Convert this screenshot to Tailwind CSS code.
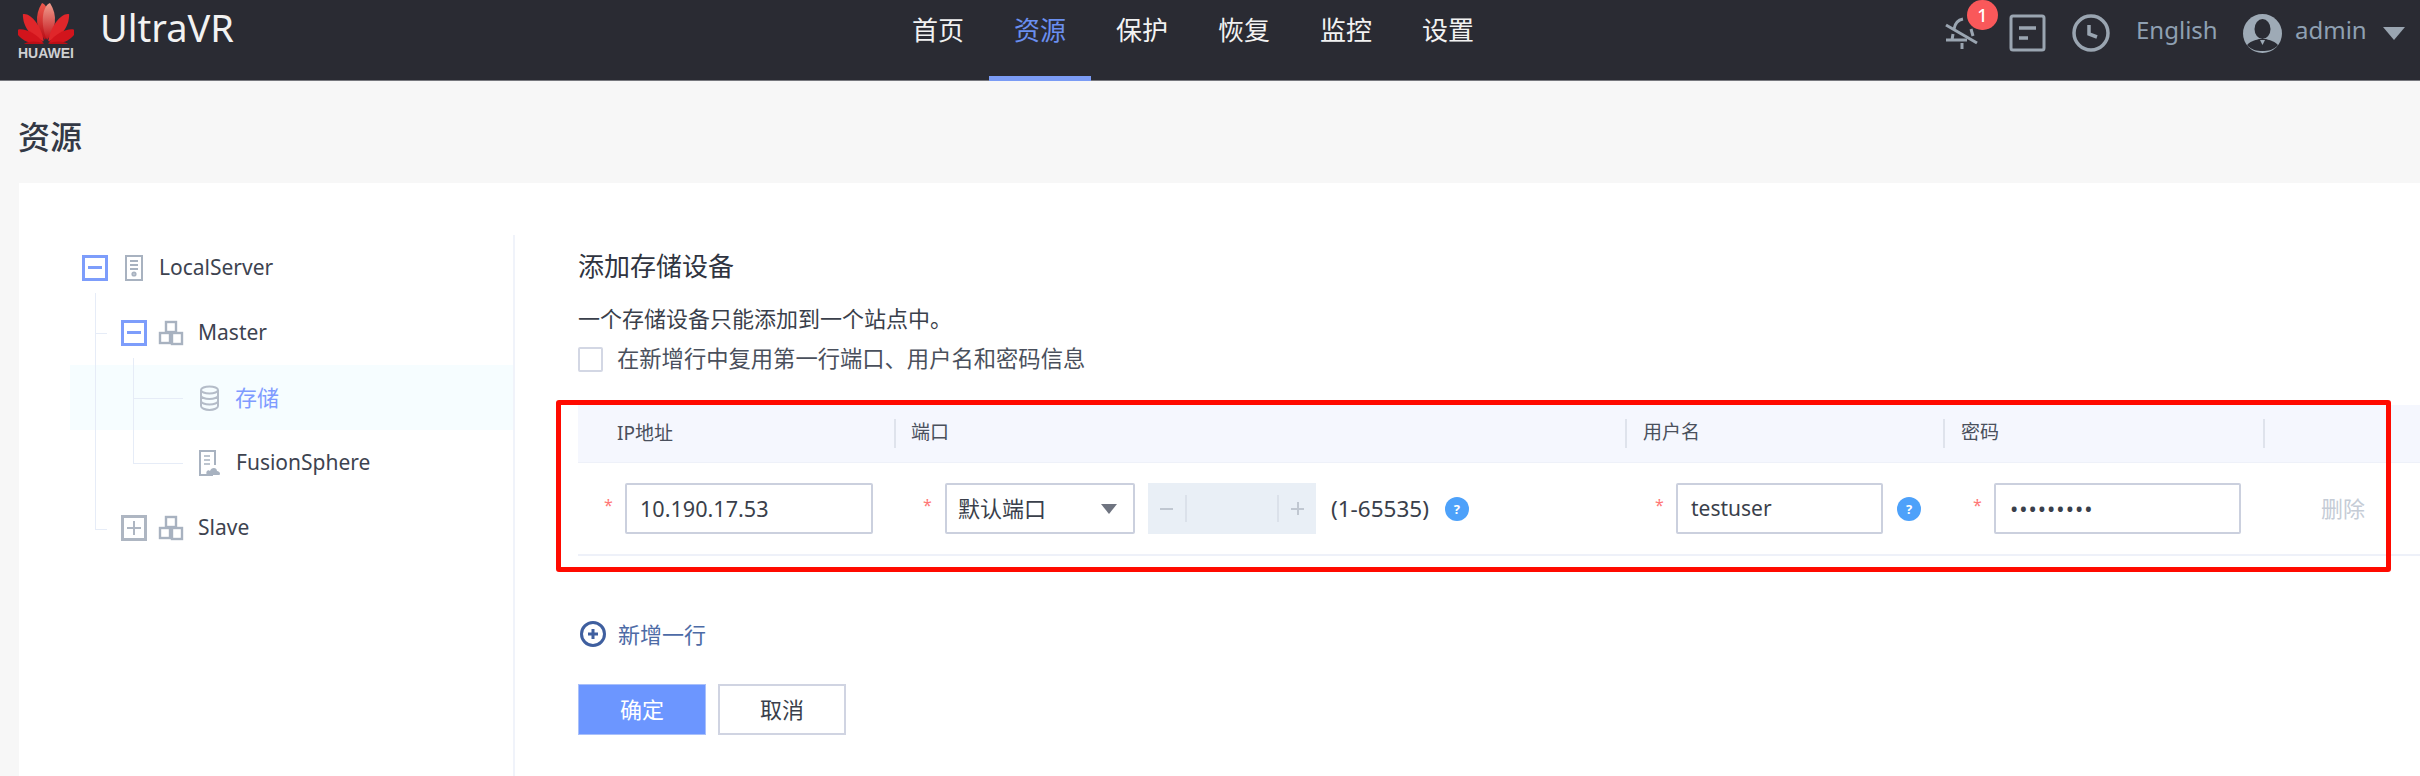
<!DOCTYPE html>
<html lang="zh-CN">
<head>
    <meta charset="UTF-8">
    <title>UltraVR</title>
    <script src="https://cdn.jsdelivr.net/npm/@tailwindcss/browser@4"></script>
</head>
<body class="bg-[#f7f7f7] h-[776px] overflow-hidden relative font-['Noto_Sans','Noto_Sans_CJK_SC',sans-serif] text-[22px] text-[#3a3f4b]">

    <!-- top bar -->
    <header class="h-[81px] bg-[#2a2b33] border-b border-[#77787e] flex">
        <div class="ml-[18px] w-[56px] pt-[2px] flex flex-col items-center">
            <svg class="shrink-0" width="56" height="42" viewBox="0 0 56 42">
                <defs>
                    <linearGradient id="topL" x1="0" y1="0" x2="0" y2="1"><stop offset="0" stop-color="#ee5a4e"/><stop offset="1" stop-color="#b80d16"/></linearGradient>
                    <linearGradient id="topR" x1="0" y1="0" x2="0" y2="1"><stop offset="0" stop-color="#f0a090"/><stop offset="1" stop-color="#c4121a"/></linearGradient>
                </defs>
                <g transform="translate(28 41)">
                    <path fill="url(#topL)" d="M-1 -3C-10 -13 -12 -28 -4 -40C4 -37 6 -18 -1 -3Z"/>
                    <path fill="#e0262a" transform="rotate(-33) scale(.92)" d="M-1 -3C-10 -13 -12 -28 -4 -40C4 -37 6 -18 -1 -3Z"/>
                    <path fill="#d2141c" transform="rotate(-63) scale(.82)" d="M-1 -3C-10 -13 -12 -28 -4 -40C4 -37 6 -18 -1 -3Z"/>
                    <path fill="#b90f16" transform="rotate(-92) scale(.6)" d="M-1 -3C-10 -13 -12 -28 -4 -40C4 -37 6 -18 -1 -3Z"/>
                    <g transform="scale(-1 1)">
                        <path fill="url(#topR)" d="M-1 -3C-10 -13 -12 -28 -4 -40C4 -37 6 -18 -1 -3Z"/>
                        <path fill="#e0262a" transform="rotate(-33) scale(.92)" d="M-1 -3C-10 -13 -12 -28 -4 -40C4 -37 6 -18 -1 -3Z"/>
                        <path fill="#d2141c" transform="rotate(-63) scale(.82)" d="M-1 -3C-10 -13 -12 -28 -4 -40C4 -37 6 -18 -1 -3Z"/>
                        <path fill="#b90f16" transform="rotate(-92) scale(.6)" d="M-1 -3C-10 -13 -12 -28 -4 -40C4 -37 6 -18 -1 -3Z"/>
                    </g>
                </g>
            </svg>
            <span class="font-['Liberation_Sans',sans-serif] font-bold text-[14px] leading-[14px] mt-[2px] text-[#cfd0d2] whitespace-nowrap">HUAWEI</span>
        </div>
        <div class="ml-[26px] pt-[1px] text-[38px] leading-[52px] text-[#f2f2f2]">UltraVR</div>

        <nav class="ml-[653px] flex text-[26px] text-[#f2f2f2]">
            <a class="w-[102px] h-[81px] pt-[11px] leading-[38px] text-center">首页</a>
            <a class="w-[102px] h-[81px] pt-[11px] leading-[38px] text-center text-[#6a8ff0] border-b-[5px] border-[#7b9cf5]">资源</a>
            <a class="w-[102px] h-[81px] pt-[11px] leading-[38px] text-center">保护</a>
            <a class="w-[102px] h-[81px] pt-[11px] leading-[38px] text-center">恢复</a>
            <a class="w-[102px] h-[81px] pt-[11px] leading-[38px] text-center">监控</a>
            <a class="w-[102px] h-[81px] pt-[11px] leading-[38px] text-center">设置</a>
        </nav>

        <div class="absolute left-[1945px] top-0 h-[81px]">
            <!-- bell muted -->
            <svg class="absolute left-0 top-[14px]" width="34" height="36" viewBox="0 0 34 36" fill="none" stroke="#9aa5b1" stroke-width="3">
                <path d="M1 11L32 29"/>
                <path d="M9 15C10 9 13 6 18 5"/>
                <path d="M26 15L28 22"/>
                <path d="M1 26H7L8 20M7 26H22"/>
                <path d="M17 29V35"/>
            </svg>
            <span class="absolute left-[22px] top-0 w-[31px] h-[30px] rounded-full bg-[#f9585a] text-white text-[18px] leading-[30px] text-center font-medium">1</span>
            <!-- task box -->
            <svg class="absolute left-[64px] top-[14px]" width="37" height="38" viewBox="0 0 37 38" fill="none" stroke="#9aa5b1" stroke-width="3">
                <rect x="2" y="2" width="33" height="34" rx="2"/>
                <path d="M10 14H27M10 24H19" stroke-width="3.5"/>
            </svg>
            <!-- clock -->
            <svg class="absolute left-[127px] top-[14px]" width="38" height="38" viewBox="0 0 38 38" fill="none" stroke="#9aa5b1" stroke-width="3.5">
                <circle cx="19" cy="19" r="17"/>
                <path d="M17 11V20L25 23"/>
            </svg>
            <span class="absolute left-[191px] top-[13px] text-[24px] leading-[34px] text-[#8fa0b2]">English</span>
            <!-- avatar -->
            <svg class="absolute left-[298px] top-[14px]" width="39" height="39" viewBox="0 0 39 39">
                <circle cx="19.5" cy="19.5" r="19.5" fill="#9eaab6"/>
                <ellipse cx="19.5" cy="15" rx="8" ry="10" fill="#2a2b33"/>
                <path d="M4 31C9 26 14 26 16 25H23C25 26 30 26 35 31C31 36 25 37 19.5 37C14 37 8 36 4 31Z" fill="#2a2b33"/>
                <path d="M17 26L19.5 31L22 26Z" fill="#9eaab6"/>
            </svg>
            <span class="absolute left-[350px] top-[13px] text-[24px] leading-[34px] text-[#8fa0b2]">admin</span>
            <span class="absolute left-[438px] top-[27px] w-0 h-0 border-x-[11px] border-x-transparent border-t-[13px] border-t-[#9aa5b1]"></span>
        </div>
    </header>

    <h1 class="h-[102px] pl-[18px] pt-[32px] text-[32px] leading-[48px] font-medium text-[#333845]">资源</h1>

    <main class="ml-[19px] h-[593px] bg-white flex">
        <!-- resource tree -->
        <aside class="w-[494px] h-full pt-[52px] pl-[51px]">
            <div class="relative text-[#3d4350] text-[21px]">
                <div class="flex items-center h-[65px] pl-[12px]">
                    <span class="w-[26px] h-[26px] border-[3px] border-[#7d9dfb] flex items-center justify-center"><i class="w-[14px] h-[3px] bg-[#7d9dfb]"></i></span>
                    <svg class="ml-[17px]" width="18" height="26" viewBox="0 0 18 26" fill="none" stroke="#a8b2c0" stroke-width="2">
                        <rect x="1" y="1" width="16" height="24"/>
                        <path d="M5 6H13M5 10H13M5 14H13"/>
                        <circle cx="9" cy="19" r="1.6"/>
                    </svg>
                    <span class="ml-[16px]">LocalServer</span>
                </div>
                <div class="flex items-center h-[65px] pl-[51px]">
                    <span class="w-[26px] h-[26px] border-[3px] border-[#7d9dfb] flex items-center justify-center"><i class="w-[14px] h-[3px] bg-[#7d9dfb]"></i></span>
                    <svg class="ml-[11px]" width="26" height="26" viewBox="0 0 26 26" fill="none" stroke="#a8b2c0" stroke-width="2.4">
                        <rect x="8" y="2" width="10" height="10"/>
                        <rect x="2" y="13" width="10" height="10"/>
                        <rect x="14" y="13" width="10" height="11"/>
                    </svg>
                    <span class="ml-[14px]">Master</span>
                </div>
                <div class="flex items-center h-[65px] pl-[130px] bg-[#f6fdff] text-[22px] text-[#7f9bff]">
                    <svg width="19" height="26" viewBox="0 0 19 26" fill="none" stroke="#b4bcc8" stroke-width="2">
                        <ellipse cx="9.5" cy="5" rx="8.5" ry="3.6"/>
                        <path d="M1 5V21C1 23 5 25 9.5 25C14 25 18 23 18 21V5M1 10.5C1 12.5 5 14 9.5 14C14 14 18 12.5 18 10.5M1 16C1 18 5 19.5 9.5 19.5C14 19.5 18 18 18 16"/>
                    </svg>
                    <span class="ml-[16px]">存储</span>
                </div>
                <div class="flex items-center h-[65px] pl-[129px]">
                    <svg width="22" height="26" viewBox="0 0 22 26" fill="none" stroke="#a8b2c0" stroke-width="2">
                        <path d="M14 25H1V1H16V15"/>
                        <path d="M5 6H11M5 10H11M5 14H11" stroke-width="1.6"/>
                        <path d="M8 25C6 22 9 19 11 21C12 17 18 17 18 21C21 21 22 25 20 25Z" fill="#a8b2c0" stroke="none"/>
                    </svg>
                    <span class="ml-[15px]">FusionSphere</span>
                </div>
                <div class="flex items-center h-[65px] pl-[51px]">
                    <span class="w-[26px] h-[26px] border-[3px] border-[#aeb6c2] flex items-center justify-center relative"><i class="w-[14px] h-[2px] bg-[#aeb6c2]"></i><i class="absolute w-[2px] h-[14px] bg-[#aeb6c2]"></i></span>
                    <svg class="ml-[11px]" width="26" height="26" viewBox="0 0 26 26" fill="none" stroke="#a8b2c0" stroke-width="2.4">
                        <rect x="8" y="2" width="10" height="10"/>
                        <rect x="2" y="13" width="10" height="10"/>
                        <rect x="14" y="13" width="10" height="11"/>
                    </svg>
                    <span class="ml-[14px]">Slave</span>
                </div>
                <!-- connector lines -->
                <i class="absolute left-[25px] top-[58px] w-[1px] h-[236px] bg-[#e6ecf7]"></i>
                <i class="absolute left-[25px] top-[98px] w-[12px] h-[1px] bg-[#e6ecf7]"></i>
                <i class="absolute left-[25px] top-[294px] w-[12px] h-[1px] bg-[#e6ecf7]"></i>
                <i class="absolute left-[63px] top-[123px] w-[1px] h-[105px] bg-[#e6ecf7]"></i>
                <i class="absolute left-[63px] top-[163px] w-[50px] h-[1px] bg-[#e6ecf7]"></i>
                <i class="absolute left-[63px] top-[228px] w-[50px] h-[1px] bg-[#e6ecf7]"></i>
            </div>
        </aside>

        <!-- form -->
        <section class="mt-[52px] flex-1 border-l-2 border-[#f0f3fa] pl-[63px] min-w-0">
            <h2 class="h-[66px] pt-[13px] text-[26px] leading-[36px] text-[#2f3440]">添加存储设备</h2>
            <p class="h-[36px] leading-[34px] text-[#3a3f4b]">一个存储设备只能添加到一个站点中。</p>
            <label class="flex items-center h-[44px] text-[#4a505c]">
                <span class="w-[25px] h-[25px] border-2 border-[#d3d7e4] rounded-[2px]"></span>
                <span class="ml-[14px] text-[22.3px]">在新增行中复用第一行端口、用户名和密码信息</span>
            </label>

            <div class="mt-[24px]">
                <div class="h-[58px] bg-[#f5f7fe] border-b border-[#eef1f9] grid grid-cols-[316px_731px_318px_320px_1fr] items-center text-[19px] text-[#4a505c]">
                    <div class="pl-[39px]">IP地址</div>
                    <div class="h-[29px] leading-[27px] border-l-2 border-[#dfe3ec] pl-[15px]">端口</div>
                    <div class="h-[29px] leading-[27px] border-l-2 border-[#dfe3ec] pl-[16px]">用户名</div>
                    <div class="h-[29px] leading-[27px] border-l-2 border-[#dfe3ec] pl-[16px]">密码</div>
                    <div class="h-[29px] border-l-2 border-[#dfe3ec]"></div>
                </div>
                <div class="h-[93px] border-b-2 border-[#eef1f9] grid grid-cols-[316px_731px_318px_320px_1fr] pt-[20px]">
                    <div class="flex h-[51px] items-center pl-[26px]">
                        <span class="w-[21px] text-[16px] text-[#f77] -mt-[8px]">*</span>
                        <div class="w-[248px] h-[51px] border-2 border-[#cbd0de] rounded-[2px] pl-[13px] leading-[47px] text-[21.6px]">10.190.17.53</div>
                    </div>
                    <div class="flex h-[51px] items-center pl-[29px]">
                        <span class="w-[22px] text-[16px] text-[#f77] -mt-[8px]">*</span>
                        <div class="w-[190px] h-[51px] border-2 border-[#cbd0de] rounded-[2px] pl-[11px] flex items-center justify-between pr-[16px]">
                            <span>默认端口</span>
                            <i class="w-0 h-0 border-x-[8px] border-x-transparent border-t-[10px] border-t-[#6f7480]"></i>
                        </div>
                        <div class="ml-[13px] w-[168px] h-[51px] bg-[#e9eff6] flex items-center text-[#c0c7d1]">
                            <span class="w-[39px] h-[27px] border-r-2 border-[#dbe1ea] flex items-center justify-center"><i class="w-[13px] h-[2px] bg-[#c0c7d1]"></i></span>
                            <span class="w-[92px] h-[27px] border-r-2 border-[#dbe1ea]"></span>
                            <span class="w-[37px] h-[27px] flex items-center justify-center relative"><i class="w-[13px] h-[2px] bg-[#c0c7d1]"></i><i class="absolute w-[2px] h-[13px] bg-[#c0c7d1]"></i></span>
                        </div>
                        <span class="ml-[15px] text-[22.5px]">(1-65535)</span>
                        <span class="ml-[16px] w-[24px] h-[24px] rounded-full bg-[#4da1fa] text-white text-[13px] font-bold leading-[24px] text-center">?</span>
                    </div>
                    <div class="flex h-[51px] items-center pl-[30px]">
                        <span class="w-[21px] text-[16px] text-[#f77] -mt-[8px]">*</span>
                        <div class="w-[207px] h-[51px] border-2 border-[#cbd0de] rounded-[2px] pl-[13px] leading-[47px] text-[21px]">testuser</div>
                        <span class="ml-[14px] w-[24px] h-[24px] rounded-full bg-[#4da1fa] text-white text-[13px] font-bold leading-[24px] text-center">?</span>
                    </div>
                    <div class="flex h-[51px] items-center pl-[30px]">
                        <span class="w-[21px] text-[16px] text-[#f77] -mt-[8px]">*</span>
                        <div class="w-[247px] h-[51px] border-2 border-[#cbd0de] rounded-[2px] pl-[14px] leading-[47px] tracking-[1px]">•••••••••</div>
                    </div>
                    <div class="h-[51px] pl-[58px] leading-[51px] text-[#c5ccd6]">删除</div>
                </div>
            </div>

            <button class="mt-[65px] h-[26px] flex items-center text-[#4d6ba6]">
                <svg class="ml-[2px]" width="26" height="26" viewBox="0 0 26 26" fill="none" stroke="#3f5f9f" stroke-width="3">
                    <circle cx="13" cy="13" r="11.5"/>
                    <path d="M8 13H18M13 8V18"/>
                </svg>
                <span class="ml-[12px]">新增一行</span>
            </button>

            <div class="mt-[37px] flex gap-[12px]">
                <button class="w-[128px] h-[51px] bg-[#6c96ff] border border-[#a9c0fa] text-white">确定</button>
                <button class="w-[128px] h-[51px] bg-white border-2 border-[#d0d4e2] text-[#3a3f4b]">取消</button>
            </div>
        </section>
    </main>

    <!-- red annotation frame -->
    <div class="absolute left-[556px] top-[400px] w-[1835px] h-[172px] border-[5px] border-[#ff0a00] rounded-[3px]"></div>
</body>
</html>
